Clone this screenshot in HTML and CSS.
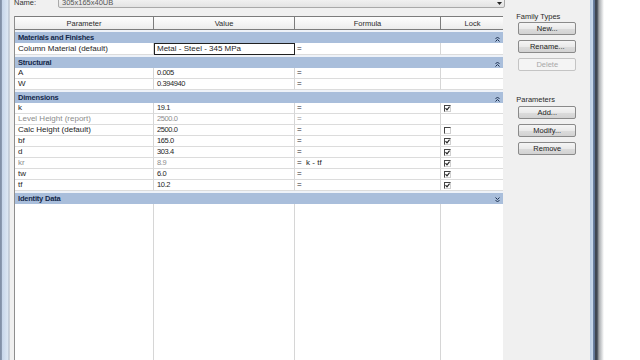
FILE: index.html
```html
<!DOCTYPE html>
<html lang="en">
<head>
  <meta charset="UTF-8">
  <title>Family Types</title>
  <link rel="stylesheet" href="styles.css">
</head>
<body>
  <div class="screen">
    <div class="frame-left"></div>
    <main class="dialog">
      <div class="name-row">
        <span class="name-label">Name:</span>
        <div class="combo">
          <span>305x165x40UB</span>
          <svg class="combo-arrow" width="5" height="3" viewBox="0 0 5 3"><path d="M0 0h5L2.5 3z" fill="#222"/></svg>
        </div>
      </div>

      <div class="body-row">
        <section class="grid-wrap">
          <table class="params">
            <colgroup>
              <col style="width:139px">
              <col style="width:141px">
              <col style="width:146px">
              <col style="width:64px">
            </colgroup>
            <thead>
              <tr>
                <th>Parameter</th>
                <th>Value</th>
                <th>Formula</th>
                <th>Lock</th>
              </tr>
            </thead>
            <tbody>
              <tr class="group">
                <td colspan="4"><span>Materials and Finishes</span><svg class="fold" width="5" height="6" viewBox="0 0 5 6"><path d="M0.5 3L2.5 1L4.5 3M0.5 5.5L2.5 3.5L4.5 5.5" stroke="#1c3050" fill="none"/></svg></td>
              </tr>
              <tr>
                <td>Column Material (default)</td>
                <td class="editing">Metal - Steel - 345 MPa</td>
                <td>=</td>
                <td></td>
              </tr>
              <tr class="group">
                <td colspan="4"><span>Structural</span><svg class="fold" width="5" height="6" viewBox="0 0 5 6"><path d="M0.5 3L2.5 1L4.5 3M0.5 5.5L2.5 3.5L4.5 5.5" stroke="#1c3050" fill="none"/></svg></td>
              </tr>
              <tr><td>A</td><td class="num">0.005</td><td>=</td><td></td></tr>
              <tr><td>W</td><td class="num">0.394940</td><td>=</td><td></td></tr>
              <tr class="group">
                <td colspan="4"><span>Dimensions</span><svg class="fold" width="5" height="6" viewBox="0 0 5 6"><path d="M0.5 3L2.5 1L4.5 3M0.5 5.5L2.5 3.5L4.5 5.5" stroke="#1c3050" fill="none"/></svg></td>
              </tr>
              <tr><td>k</td><td class="num">19.1</td><td>=</td><td><span class="check on"></span></td></tr>
              <tr class="muted"><td>Level Height (report)</td><td class="num">2500.0</td><td>=</td><td></td></tr>
              <tr><td>Calc Height (default)</td><td class="num">2500.0</td><td>=</td><td><span class="check"></span></td></tr>
              <tr><td>bf</td><td class="num">165.0</td><td>=</td><td><span class="check on"></span></td></tr>
              <tr><td>d</td><td class="num">303.4</td><td>=</td><td><span class="check on"></span></td></tr>
              <tr class="muted"><td>kr</td><td class="num">8.9</td><td class="formula">=&nbsp; k - tf</td><td><span class="check on"></span></td></tr>
              <tr><td>tw</td><td class="num">6.0</td><td>=</td><td><span class="check on"></span></td></tr>
              <tr><td>tf</td><td class="num">10.2</td><td>=</td><td><span class="check on"></span></td></tr>
              <tr class="group">
                <td colspan="4"><span>Identity Data</span><svg class="fold" width="5" height="6" viewBox="0 0 5 6"><path d="M0.5 0.5L2.5 2.5L4.5 0.5M0.5 3L2.5 5L4.5 3" stroke="#1c3050" fill="none"/></svg></td>
              </tr>
              <tr class="filler"><td></td><td></td><td></td><td></td></tr>
            </tbody>
          </table>
        </section>

        <aside class="side">
          <h4 class="side-label">Family Types</h4>
          <button class="btn">New...</button>
          <button class="btn">Rename...</button>
          <button class="btn" disabled>Delete</button>

          <h4 class="side-label params-label">Parameters</h4>
          <button class="btn">Add...</button>
          <button class="btn">Modify...</button>
          <button class="btn">Remove</button>
        </aside>
      </div>
    </main>
    <div class="frame-right"></div>
  </div>
</body>
</html>
```

FILE: styles.css
```css
* {
  margin: 0;
  padding: 0;
  box-sizing: border-box;
}

body {
  width: 640px;
  height: 360px;
  overflow: hidden;
  background: #fff;
  font-family: "Liberation Sans", Arial, sans-serif;
  font-size: 7.5px;
  color: #1e1e1e;
}

.screen {
  display: flex;
  width: 604px;
  height: 360px;
}

.frame-left {
  width: 10px;
  background: linear-gradient(to right, #7d8ca4 0, #8f9db3 2px, #c6d5ea 2px, #dde7f3 8px, #a9b3c2 9px, #f0f0f0 10px);
}

.dialog {
  width: 580px;
  background: #f0f0f0;
  padding-left: 4px;
}

.frame-right {
  width: 14px;
  background: linear-gradient(to right, #b9cce4 0, #c9d9ec 3px, #6f86a8 3px, #5a6f90 5px, #3e4652 5px, #3e4652 7px, #a6aaae 9px, #fff 14px);
}

/* name combo, mostly scrolled off the top */
.name-row {
  display: flex;
  align-items: center;
  height: 12px;
  margin-top: -4px;
}

.name-label {
  width: 44px;
  color: #333;
}

.combo {
  display: flex;
  align-items: center;
  justify-content: space-between;
  width: 447px;
  height: 12px;
  padding: 0 2px 0 3px;
  border: 1px solid #a9a9a9;
  border-radius: 2px;
  background: linear-gradient(#f6f6f6, #e3e3e3);
  color: #555;
}

.combo-arrow {
  margin-top: 2px;
}

.body-row {
  display: flex;
  margin-top: 8px;
}

/* parameter grid */
.grid-wrap {
  width: 491px;
  height: 350px;
  overflow: hidden;
}

.params {
  width: 491px;
  table-layout: fixed;
  border-collapse: separate;
  border-spacing: 0;
  background: #fff;
  border-left: 1px solid #8e8e8e;
}

.params th {
  height: 14px;
  font-weight: normal;
  color: #2a2a2a;
  background: linear-gradient(#fdfdfd, #ececec);
  border-top: 1px solid #7c7c7c;
  border-right: 1px solid #7c7c7c;
  border-bottom: 1px solid #7c7c7c;
  text-align: center;
}

.params td {
  height: 11px;
  line-height: 10px;
  padding: 0 0 0 3px;
  font-size: 8px;
  border-right: 1px solid #d6d6d6;
  border-bottom: 1px solid #dcdcdc;
  white-space: nowrap;
  overflow: hidden;
}

.params td:nth-child(3) {
  padding-left: 2px;
}

.params .num {
  font-size: 7.5px;
  letter-spacing: -0.4px;
}

.params .muted td {
  color: #8c8c8c;
}

.params .muted .formula {
  color: #1e1e1e;
}

.params .editing {
  border: 1px solid #202020;
  padding-left: 2px;
}

.params .group td {
  position: relative;
  height: 13px;
  font-size: 7.5px;
  letter-spacing: -0.2px;
  border-top: 2px solid #eef2f8;
  border-bottom: 0;
  border-right: 1px solid #dcdcdc;
  background: #a9bedb;
  color: #13284a;
  font-weight: bold;
}

.fold {
  position: absolute;
  right: 4px;
  top: 4px;
}

.params .filler td {
  height: 170px;
  border-bottom: 0;
}

.check {
  display: block;
  width: 7px;
  height: 7px;
  border-top: 1px solid #444;
  border-left: 1px solid #444;
  border-right: 1px solid #d0d0d0;
  border-bottom: 1px solid #d0d0d0;
  background: #fff;
}

.check.on {
  background: no-repeat center / 5px 5px url("data:image/svg+xml,%3Csvg xmlns='http://www.w3.org/2000/svg' viewBox='0 0 5 5'%3E%3Cpath d='M0.5 2.2L2 3.8L4.6 0.6' stroke='%23222' stroke-width='1.2' fill='none'/%3E%3C/svg%3E") #fff;
}

/* right column */
.side {
  display: flex;
  flex-direction: column;
  width: 87px;
  margin-top: -3px;
  padding-left: 13px;
}

.side-label {
  font-weight: normal;
  color: #2a2a2a;
  height: 6px;
  line-height: 7px;
  margin-bottom: 3px;
}

.btn {
  width: 58px;
  height: 13px;
  margin: 0 0 5px 2px;
  border: 1px solid #8a8a8a;
  border-radius: 2px;
  background: linear-gradient(#f5f5f5 0, #eaeaea 50%, #dcdcdc 51%, #d2d2d2 100%);
  font-family: inherit;
  font-size: 7.5px;
  color: #222;
}

.btn:disabled {
  border-color: #c4c4c4;
  background: #f4f4f4;
  color: #a8a8a8;
}

.params-label {
  margin-top: 20px;
  margin-bottom: 4px;
}
```
